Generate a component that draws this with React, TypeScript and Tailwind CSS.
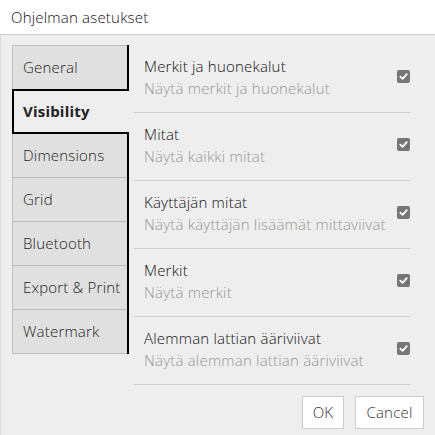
import { useState } from 'react';

const tabs = ['General', 'Visibility', 'Dimensions', 'Grid', 'Bluetooth', 'Export & Print', 'Watermark'];

const options = [
    { title: 'Merkit ja huonekalut', desc: 'Näytä merkit ja huonekalut' },
    { title: 'Mitat', desc: 'Näytä kaikki mitat' },
    { title: 'Käyttäjän mitat', desc: 'Näytä käyttäjän lisäämät mittaviivat' },
    { title: 'Merkit', desc: 'Näytä merkit' },
    { title: 'Alemman lattian ääriviivat', desc: 'Näytä alemman lattian ääriviivat' },
];

function CheckBox({ checked, onToggle }: { checked: boolean; onToggle: () => void }) {
    return (
        <button
            onClick={onToggle}
            className="w-[13px] h-[13px] rounded-[2px] bg-[#767676] flex items-center justify-center"
        >
            {checked && (
                <svg width="9" height="9" viewBox="0 0 10 10">
                    <path d="M1.5 5.2 L4 7.6 L8.6 2.4" fill="none" stroke="white" strokeWidth="2" strokeLinecap="round" strokeLinejoin="round" />
                </svg>
            )}
        </button>
    );
}

export default function App() {
    const [active, setActive] = useState(1);
    const [checked, setChecked] = useState<boolean[]>(options.map(() => true));

    return (
        <div className="w-[435px] h-[435px] bg-[#eeeeee] flex flex-col text-[15px] tracking-[0.2px] font-[350] text-[#333]" style={{ fontFamily: '"Open Sans", sans-serif' }}>
            {/* Title bar */}
            <div className="h-[35px] bg-white border-b border-[#cccccc] flex items-center px-[11px] text-[#111] shrink-0">
                Ohjelman asetukset
            </div>

            <div className="flex-1 flex flex-col border-l border-[#dddddd] pl-[11px] pt-[10px]">
                <div className="flex items-start">
                    {/* Tab list */}
                    <div className="w-[117px] flex flex-col border-r-2 border-black">
                        {tabs.map((t, i) =>
                            i === active ? (
                                <button
                                    key={t}
                                    onClick={() => setActive(i)}
                                    className="h-[45px] -mr-[2px] -mt-px relative z-10 bg-[#eeeeee] border-2 border-r-0 border-black text-left pl-[9px] font-bold text-[#222]"
                                >
                                    {t}
                                </button>
                            ) : (
                                <button
                                    key={t}
                                    onClick={() => setActive(i)}
                                    className="h-[45px] bg-[#e0e0e0] border border-r-0 border-[#bdbdbd] -mt-px first:mt-0 text-left pl-[10px] font-[350] text-[#222]"
                                >
                                    {t}
                                </button>
                            )
                        )}
                    </div>

                    {/* Options */}
                    <div className="w-[276px] ml-[5px]">
                        {options.map((o, i) => (
                            <div key={o.title} className="h-[68px] border-b border-[#cccccc] flex items-start justify-between pt-[10px] pl-[10px]">
                                <div className="leading-[22px]">
                                    <div className="text-[#111]">{o.title}</div>
                                    <div className="text-[#969696]">{o.desc}</div>
                                </div>
                                <div className="mt-[15px]">
                                    <CheckBox
                                        checked={checked[i]}
                                        onToggle={() => setChecked(checked.map((c, j) => (j === i ? !c : c)))}
                                    />
                                </div>
                            </div>
                        ))}
                    </div>
                </div>

                <div className="flex justify-end gap-[11px] pr-[11px] mt-[11px]">
                    <button className="h-[33px] w-[42px] bg-white border border-[#cccccc] font-[350] text-[#333]">OK</button>
                    <button className="h-[33px] w-[69px] bg-white border border-[#cccccc] font-[350] text-[#333]">Cancel</button>
                </div>
            </div>
        </div>
    );
}
